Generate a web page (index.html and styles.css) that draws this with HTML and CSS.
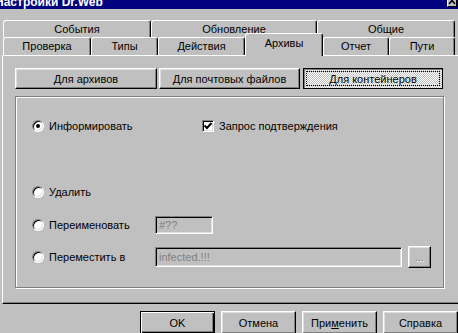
FILE: index.html
```html
<!DOCTYPE html>
<html lang="ru">
<head>
  <meta charset="UTF-8">
  <meta name="viewport" content="width=device-width, initial-scale=1.0">
  <title>Настройки Dr.Web</title>
  <link rel="stylesheet" href="styles.css">
</head>
<body>
  <div class="titlebar">
    <span class="title">Настройки Dr.Web</span>
    <span class="close">
      <svg width="8" height="6" viewBox="0 0 8 6"><path d="M1 -3 L7 4 M7 -3 L1 4" stroke="#000" stroke-width="1.6" fill="none"/></svg>
    </span>
  </div>

  <div class="dialog">
    <div class="tabrow">
      <div class="tab tab-events">События</div>
      <div class="tab tab-update">Обновление</div>
      <div class="tab tab-common">Общие</div>
    </div>
    <div class="tabrow tabrow-front">
      <div class="tab tab-check">Проверка</div>
      <div class="tab tab-types">Типы</div>
      <div class="tab tab-actions">Действия</div>
      <div class="tab tab-archives active">Архивы</div>
      <div class="tab tab-report">Отчет</div>
      <div class="tab tab-paths">Пути</div>
    </div>

    <div class="panel">
      <div class="subtabs">
        <button class="btn sub-1">Для архивов</button>
        <button class="btn sub-2">Для почтовых файлов</button>
        <button class="btn sub-3 pressed">Для контейнеров</button>
      </div>

      <div class="group">
        <div class="row row-inform">
          <label class="opt opt-wide"><span class="radio checked"></span>Информировать</label>
          <label class="opt"><span class="check">
            <svg width="10" height="10" viewBox="0 0 10 10"><path d="M1.5 4.5 L4 7 L8.5 2" stroke="#000" stroke-width="2" fill="none"/></svg>
          </span>Запрос подтверждения</label>
        </div>
        <div class="row row-delete">
          <label class="opt"><span class="radio"></span>Удалить</label>
        </div>
        <div class="row row-rename">
          <label class="opt opt-field"><span class="radio"></span>Переименовать</label>
          <div class="field field-short">#??</div>
        </div>
        <div class="row row-move">
          <label class="opt opt-field"><span class="radio"></span>Переместить в</label>
          <div class="field field-long">infected.!!!</div>
          <button class="btn browse">...</button>
        </div>
      </div>
    </div>

    <div class="actions">
      <button class="btn btn-default">OK</button>
      <button class="btn">Отмена</button>
      <button class="btn">При<u>м</u>енить</button>
      <button class="btn">Справка</button>
    </div>
  </div>
</body>
</html>
```

FILE: styles.css
```css
body {
  margin: 0;
  width: 458px;
  height: 333px;
  overflow: hidden;
  background: #c0c0c0;
  font-family: "Liberation Sans", Arial, sans-serif;
  font-size: 11px;
  color: #000;
}

.titlebar {
  height: 9px;
  background: #000080;
  display: flex;
  justify-content: space-between;
  overflow: hidden;
}

.title {
  color: #fff;
  font-weight: bold;
  font-size: 12px;
  line-height: 14px;
  margin: -5px 0 0 -5px;
  white-space: nowrap;
}

.close {
  box-sizing: border-box;
  width: 10px;
  height: 7px;
  margin-right: 1px;
  background: #c0c0c0;
  border-left: 1px solid #fff;
  border-right: 1px solid #000;
  border-bottom: 1px solid #000;
  display: flex;
  justify-content: center;
}

.dialog {
  padding-top: 11px;
}

/* tabs */
.tabrow {
  display: flex;
  height: 17px;
  margin-left: 3px;
}

.tabrow-front {
  height: 18px;
}

.tab {
  box-sizing: border-box;
  height: 100%;
  border-top: 1px solid #fff;
  border-left: 1px solid #fff;
  border-right: 1px solid #000;
  box-shadow: inset -1px 0 #808080;
  border-radius: 3px 3px 0 0;
  background: #c0c0c0;
  text-align: center;
  line-height: 16px;
  white-space: nowrap;
}

.tab-events { width: 148px; }
.tab-update { width: 166px; }
.tab-common { width: 138px; }
.tab-check { width: 88px; }
.tab-types { width: 67px; }
.tab-actions { width: 87px; }
.tab-archives { width: 78px; }
.tab-report { width: 66px; }
.tab-paths { width: 66px; }

.tab.active {
  position: relative;
  z-index: 1;
  height: 23px;
  margin-top: -4px;
  line-height: 19px;
}

/* panel */
.panel {
  box-sizing: border-box;
  width: 458px;
  height: 249px;
  margin-left: 2px;
  border: 1px solid;
  border-color: #fff #000 #000 #fff;
  box-shadow: inset -1px -1px #808080;
  padding: 12px 0 0 12px;
}

.subtabs {
  display: flex;
}

.sub-1 { width: 142px; }
.sub-2 { width: 141px; margin-left: 2px; }
.sub-3 { width: 140px; margin-left: 3px; }

.btn {
  box-sizing: border-box;
  height: 21px;
  padding: 0;
  background: #c0c0c0;
  border: 1px solid;
  border-color: #fff #000 #000 #fff;
  box-shadow: inset -1px -1px #808080, inset 1px 1px #dfdfdf;
  font-family: inherit;
  font-size: 11px;
  color: #000;
}

.btn.pressed {
  border-color: #000;
  box-shadow: inset 1px 1px #808080;
  background: repeating-conic-gradient(#fff 0 25%, #c0c0c0 0 50%) 0 0 / 2px 2px;
  outline: 1px dotted #000;
  outline-offset: -4px;
}

.btn u {
  text-decoration-thickness: 1px;
}

.group {
  box-sizing: border-box;
  width: 429px;
  height: 192px;
  margin-top: 7px;
  border: 1px solid #808080;
  box-shadow: 1px 1px #fff, inset 1px 1px #fff;
  padding: 20px 0 0 16px;
}

.row {
  display: flex;
  align-items: center;
  height: 18px;
}

.row-delete { margin-top: 48px; }
.row-rename { margin-top: 15px; }
.row-move { margin-top: 12px; height: 22px; }

.opt {
  display: flex;
  align-items: center;
  gap: 5px;
  white-space: nowrap;
}

.opt-wide { width: 170px; }
.opt-field { width: 123px; }

.radio {
  box-sizing: border-box;
  width: 12px;
  height: 12px;
  border-radius: 50%;
  background: #fff;
  border: 1px solid;
  border-color: #808080 #fff #fff #808080;
  box-shadow: inset 1px 1px #000, inset -1px -1px #dfdfdf;
  display: flex;
  align-items: center;
  justify-content: center;
}

.radio.checked::after {
  content: "";
  width: 4px;
  height: 4px;
  border-radius: 50%;
  background: #000;
}

.check {
  box-sizing: border-box;
  width: 12px;
  height: 12px;
  background: #fff;
  border: 1px solid;
  border-color: #808080 #fff #fff #808080;
  box-shadow: inset 1px 1px #000, inset -1px -1px #dfdfdf;
  display: flex;
}

.field {
  box-sizing: border-box;
  height: 18px;
  border: 1px solid;
  border-color: #808080 #fff #fff #808080;
  box-shadow: inset 1px 1px #000, inset -1px -1px #dfdfdf;
  color: #808080;
  padding-left: 3px;
  line-height: 16px;
}

.field-short { width: 58px; }
.field-long { width: 247px; height: 20px; line-height: 18px; }

.browse {
  width: 23px;
  height: 22px;
  margin-left: 6px;
  color: #808080;
  text-shadow: 1px 1px #fff;
  line-height: 14px;
}

/* bottom buttons */
.actions {
  display: flex;
  gap: 6px;
  margin-top: 7px;
  padding-left: 140px;
}

.actions .btn {
  width: 75px;
  height: 23px;
}

.btn.btn-default {
  border-color: #000;
  box-shadow: inset 1px 1px #fff, inset -1px -1px #000, inset -2px -2px #808080;
}
```
